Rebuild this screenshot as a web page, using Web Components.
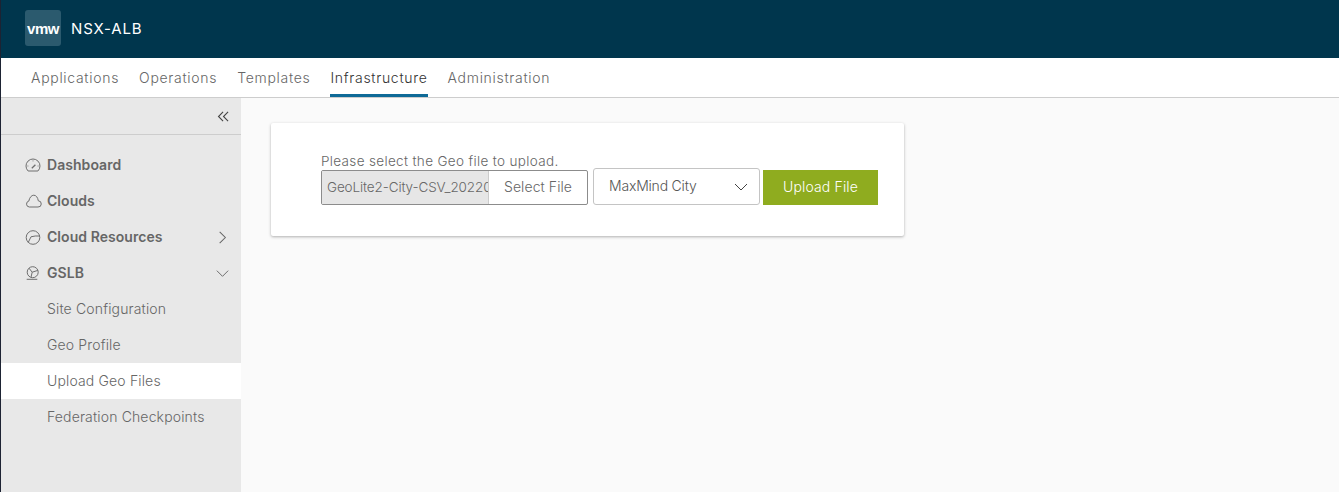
<!DOCTYPE html>
<html>
<head>
<meta charset="utf-8">
<title>NSX-ALB</title>
<style>
  html, body { margin: 0; padding: 0; height: 100%; }
  body { font-family: Inter, "Open Sans", sans-serif; font-weight: 350; color: #565656; background: #fafafa; overflow: hidden; }
  app-shell { height: 492px; }
</style>
</head>
<body>
<app-shell>
  <top-header slot="header" title-text="NSX-ALB"></top-header>
  <tab-bar slot="tabs"></tab-bar>
  <side-nav slot="nav"></side-nav>
  <upload-card></upload-card>
</app-shell>

<script>
const ICONS = {
  dashboard: `<path d="M4.1 15A7 7 0 1 1 13.9 15Z" fill="none" stroke="currentColor"/><path d="M7.8 12.2l3.6-3.4" stroke="currentColor" stroke-width="1.3"/><path d="M3.4 10h1M13.6 10h1M9 4.4v1" stroke="currentColor" stroke-width=".8"/>`,
  cloud: `<path d="M5.3 15a3 3 0 0 1-.5-5.9C5.5 5.5 7.5 3.2 9.8 3.2c2.4 0 4 2.4 4.5 5.6a3.1 3.1 0 0 1-.3 6.2Z" fill="none" stroke="currentColor"/>`,
  resources: `<circle cx="9" cy="9.5" r="6.8" fill="none" stroke="currentColor"/><path d="M4.2 14.5 7 8.8Q11 7.6 15.8 8" fill="none" stroke="currentColor"/>`,
  gslb: `<circle cx="8.7" cy="8.2" r="5.5" fill="none" stroke="currentColor"/><path d="M5 4.2 8.2 8.2 7 13.2M8.2 8.2l5.6-1.8M2.7 15.3h10.6" fill="none" stroke="currentColor"/>`,
  right: `<path d="M6 3l6 6-6 6" fill="none" stroke="currentColor" stroke-width="1.1"/>`,
  down: `<path d="M3 6l6 6 6-6" fill="none" stroke="currentColor" stroke-width="1"/>`,
  collapse: `<path d="M8.5 3.5 3 9l5.5 5.5M14.5 3.5 9 9l5.5 5.5" fill="none" stroke="currentColor" stroke-width="1.3"/>`
};

class AppShell extends HTMLElement {
  constructor(){
    super();
    this.attachShadow({mode: "open"});
    this.shadowRoot.innerHTML = `
      <style>
        :host { display: flex; flex-direction: column; border-left: 1px solid #1d2333; box-sizing: border-box; }
        .body { flex: 1; display: flex; min-height: 0; }
        main { flex: 1; padding: 25px 30px; }
      </style>
      <slot name="header"></slot>
      <slot name="tabs"></slot>
      <div class="body">
        <slot name="nav"></slot>
        <main><slot></slot></main>
      </div>
    `;
  }
}

class TopHeader extends HTMLElement {
  constructor(){
    super();
    this.attachShadow({mode: "open"});
    this.shadowRoot.innerHTML = `
      <style>
        :host { display: flex; align-items: center; height: 58px; box-sizing: border-box; background: #00364d; padding: 0 0 2px 24px; color: #fff; }
        .logo { width: 36px; height: 36px; border-radius: 3px; background: #2b5a6e; display: flex; align-items: center; justify-content: center; font: 700 15px/1 "Liberation Sans", sans-serif; letter-spacing: -.5px; }
        .name { margin-left: 10px; font-size: 15px; font-weight: 400; letter-spacing: .85px; }
      </style>
      <div class="logo">vmw</div>
      <div class="name">${this.getAttribute("title-text")}</div>
    `;
  }
}

class TabBar extends HTMLElement {
  constructor(){
    super();
    this.attachShadow({mode: "open"});
    const tabs = ["Applications", "Operations", "Templates", "Infrastructure", "Administration"];
    this.shadowRoot.innerHTML = `
      <style>
        :host { display: flex; gap: 20px; height: 39px; padding-left: 30px; background: #fff; border-bottom: 1px solid #cdcdcd; font-size: 14px; letter-spacing: .7px; color: #666; flex: none; }
        .tab { line-height: 40px; height: 39px; box-sizing: border-box; }
        .on { color: #333; border-bottom: 3px solid #0f6a97; }
      </style>
      ${tabs.map(t => `<div class="tab${t === "Infrastructure" ? " on" : ""}">${t}</div>`).join("")}
    `;
  }
}

class NavItem extends HTMLElement {
  constructor(){
    super();
    this.attachShadow({mode: "open"});
    const icon = this.getAttribute("icon");
    const arrow = this.getAttribute("arrow");
    this.shadowRoot.innerHTML = `
      <style>
        :host { display: flex; align-items: center; height: 36px; padding-left: 46px; padding-right: 10px; position: relative; font-size: 14px; letter-spacing: .15px; color: #666; }
        :host([strong]) { font-weight: 600; letter-spacing: .05px; }
        :host([active]) { background: #fff; }
        svg { width: 18px; height: 18px; flex: none; }
        .icon { position: absolute; left: 23px; top: 9px; color: #6e6e6e; }
        .label { flex: 1; padding-bottom: 2px; }
        .arrow { width: 17px; height: 17px; color: #666; }
      </style>
      ${icon ? `<svg class="icon" viewBox="0 0 18 18">${ICONS[icon]}</svg>` : ""}
      <span class="label"><slot></slot></span>
      ${arrow ? `<svg class="arrow" viewBox="0 0 18 18">${ICONS[arrow]}</svg>` : ""}
    `;
  }
}

class SideNav extends HTMLElement {
  constructor(){
    super();
    this.attachShadow({mode: "open"});
    this.shadowRoot.innerHTML = `
      <style>
        :host { display: block; width: 240px; background: #e8e8e8; flex: none; }
        .collapse { height: 36px; border-bottom: 1px solid #cdcdcd; display: flex; align-items: center; justify-content: flex-end; padding-right: 10px; color: #444; margin-bottom: 12px; }
        .collapse svg { width: 15px; height: 15px; }
      </style>
      <div class="collapse"><svg viewBox="0 0 18 18">${ICONS.collapse}</svg></div>
      <nav-item strong icon="dashboard">Dashboard</nav-item>
      <nav-item strong icon="cloud">Clouds</nav-item>
      <nav-item strong icon="resources" arrow="right">Cloud Resources</nav-item>
      <nav-item strong icon="gslb" arrow="down">GSLB</nav-item>
      <nav-item>Site Configuration</nav-item>
      <nav-item>Geo Profile</nav-item>
      <nav-item active>Upload Geo Files</nav-item>
      <nav-item>Federation Checkpoints</nav-item>
    `;
  }
}

class UploadCard extends HTMLElement {
  constructor(){
    super();
    this.attachShadow({mode: "open"});
    this.shadowRoot.innerHTML = `
      <style>
        :host { display: block; width: 633px; height: 113px; box-sizing: border-box; background: #fff; padding: 30px 26px 0 50px; border-radius: 2px; box-shadow: 0 1px 3px rgba(0,0,0,.3); font-size: 13.5px; color: #666; }
        .hint { line-height: 16px; height: 16px; letter-spacing: .34px; }
        .row { display: flex; align-items: flex-end; height: 37px; margin-top: -1px; }
        .file { width: 267px; height: 35px; box-sizing: border-box; border: 1px solid #8c8c8c; border-radius: 2px; display: flex; overflow: hidden; }
        .name { width: 167px; background: #e6e6e6; border-right: 1px solid #ccc; padding-left: 5px; line-height: 33px; white-space: nowrap; overflow: hidden; font-size: 13.5px; letter-spacing: -.12px; flex: none; box-sizing: border-box; }
        .pick { flex: 1; text-align: center; line-height: 32px; font-size: 14px; letter-spacing: .08px; padding-bottom: 1px; }
        .select { width: 167px; height: 37px; margin-left: 5px; box-sizing: border-box; border: 1px solid #c4c4c4; border-radius: 3px; display: flex; align-items: center; justify-content: space-between; padding: 0 9px 0 15px; color: #565656; font-size: 14px; letter-spacing: -.2px; }
        .select span { padding-bottom: 2px; }
        .select svg { width: 18px; height: 18px; color: #444; }
        .upload { width: 115px; height: 35px; margin-left: 3px; background: #8fac1f; color: #fff; border: 0; padding: 0 0 2px; font: inherit; font-size: 14px; letter-spacing: .15px; }
      </style>
      <div class="hint">Please select the Geo file to upload.</div>
      <div class="row">
        <div class="file">
          <div class="name">GeoLite2-City-CSV_20220101</div>
          <div class="pick">Select File</div>
        </div>
        <div class="select"><span>MaxMind City</span><svg viewBox="0 0 18 18">${ICONS.down}</svg></div>
        <button class="upload">Upload File</button>
      </div>
    `;
  }
}

customElements.define("app-shell", AppShell);
customElements.define("top-header", TopHeader);
customElements.define("tab-bar", TabBar);
customElements.define("nav-item", NavItem);
customElements.define("side-nav", SideNav);
customElements.define("upload-card", UploadCard);
</script>
</body>
</html>
